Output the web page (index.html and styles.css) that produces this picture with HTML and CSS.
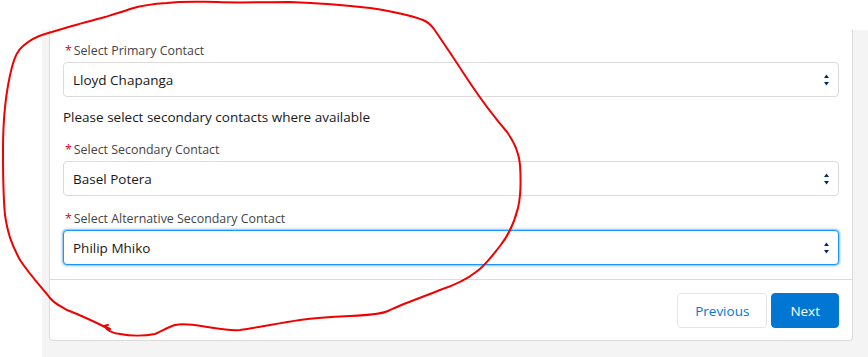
FILE: index.html
```html
<!DOCTYPE html>
<html lang="en">
<head>
  <meta charset="UTF-8">
  <meta name="viewport" content="width=device-width, initial-scale=1.0">
  <title>Select Contacts</title>
  <link rel="stylesheet" href="styles.css">
</head>
<body>
  <div class="page">
    <div class="card">
      <div class="card-body">
        <div class="field">
          <label class="field-label"><abbr class="required">*</abbr>Select Primary Contact</label>
          <div class="combobox">
            <span class="combobox-value">Lloyd Chapanga</span>
            <svg class="combobox-arrows" width="7" height="14" viewBox="0 0 7 14"><path d="M3.5 1.5 L6 5 L1 5 Z M1 9 L6 9 L3.5 12.5 Z"/></svg>
          </div>
        </div>

        <p class="hint">Please select secondary contacts where available</p>

        <div class="field">
          <label class="field-label"><abbr class="required">*</abbr>Select Secondary Contact</label>
          <div class="combobox">
            <span class="combobox-value">Basel Potera</span>
            <svg class="combobox-arrows" width="7" height="14" viewBox="0 0 7 14"><path d="M3.5 1.5 L6 5 L1 5 Z M1 9 L6 9 L3.5 12.5 Z"/></svg>
          </div>
        </div>

        <div class="field">
          <label class="field-label"><abbr class="required">*</abbr>Select Alternative Secondary Contact</label>
          <div class="combobox is-focused">
            <span class="combobox-value">Philip Mhiko</span>
            <svg class="combobox-arrows" width="7" height="14" viewBox="0 0 7 14"><path d="M3.5 1.5 L6 5 L1 5 Z M1 9 L6 9 L3.5 12.5 Z"/></svg>
          </div>
        </div>
      </div>

      <div class="card-footer">
        <button class="button button-neutral">Previous</button>
        <button class="button button-brand">Next</button>
      </div>
    </div>
  </div>

  <!-- hand-drawn annotation over the screenshot -->
  <svg class="scribble" width="868" height="357" viewBox="0 0 868 357">
    <path d="M20 260 C12 245 8 235 5 215 C3 195 3 175 3 150 C3 120 6 90 12 67 C15 55 18 50 23 46 C30 40 38 36 45 34 C55 31 62 29 72 26 C85 22 95 20 105 17 C115 14 122 12 130 9 C140 6 150 4 167 3 C185 1 200 2 217 2 C240 3 260 2 290 2 C320 3 345 5 370 8 C390 11 410 15 423 20 C428 22 431 25 434 29 C445 45 455 60 468 80 C480 98 495 118 507 132 C515 143 519 152 520 165 C521 180 521 195 518 208 C514 224 508 236 500 246 C492 256 485 266 476 272 C466 280 452 286 440 290 C420 298 400 305 388 311 C382 314 370 315 350 316 C330 317 315 318 300 320 C280 323 260 327 240 330 C230 331 220 329 207 327 C195 325 185 323 175 325 C168 327 162 331 155 334 C145 336 130 336 120 334 C112 333 107 330 105 327 M110 329 L104 326 L108 325 M107 328 C95 322 80 315 67 310 C60 306 55 304 50 298 C42 288 30 275 20 260"/>
  </svg>
</body>
</html>
```

FILE: styles.css
```css
body {
  margin: 0;
  background-color: #ffffff;
  font-family: "Open Sans", "Noto Sans", Arial, sans-serif;
  color: #181818;
  position: relative;
  height: 357px;
  overflow: hidden;
}
.page {
  margin-top: 30px;
  margin-left: 42px;
  padding: 0 15px 16px 7px;
  background-color: #f4f4f4;
}
.card {
  background-color: #ffffff;
  border: 1px solid #dddbda;
  border-top: none;
  border-radius: 0 0 4px 4px;
}
.card-body {
  padding: 12px 13px 14px 13px;
}
.field-label {
  display: block;
  font-size: 12.4px;
  line-height: 18px;
  color: #444444;
  margin-bottom: 2px;
}
.required {
  color: #ea001e;
  text-decoration: none;
  margin: 0 2px 0 2px;
}
.combobox {
  display: flex;
  align-items: center;
  justify-content: space-between;
  height: 33px;
  padding: 0 8px 0 9px;
  border: 1px solid #dddbda;
  border-radius: 4px;
  background-color: #ffffff;
}
.combobox.is-focused {
  border-color: #1b96ff;
  box-shadow: 0 0 3px #0176d3;
}
.combobox-value {
  font-size: 13.5px;
  color: #181818;
}
.combobox-arrows {
  fill: #032d60;
}
.hint {
  font-size: 13.5px;
  line-height: 20px;
  margin: 10px 0 14px 0;
}
.field + .field {
  margin-top: 14px;
}
.card-footer {
  display: flex;
  justify-content: flex-end;
  gap: 4px;
  padding: 13px 13px 12px 13px;
  border-top: 1px solid #dddbda;
}
.button {
  font-family: inherit;
  font-size: 13.5px;
  height: 35px;
  padding: 0 17px;
  border-radius: 4px;
  cursor: pointer;
}
.button-neutral {
  background-color: #ffffff;
  border: 1px solid #e5e5e5;
  color: #0176d3;
}
.button-brand {
  padding: 0 18px;
  background-color: #0176d3;
  border: 1px solid #0176d3;
  color: #ffffff;
}
.scribble {
  position: absolute;
  top: 0;
  left: 0;
  pointer-events: none;
  fill: none;
  stroke: #f20000;
  stroke-width: 2;
  stroke-linecap: round;
  stroke-linejoin: round;
}
```
